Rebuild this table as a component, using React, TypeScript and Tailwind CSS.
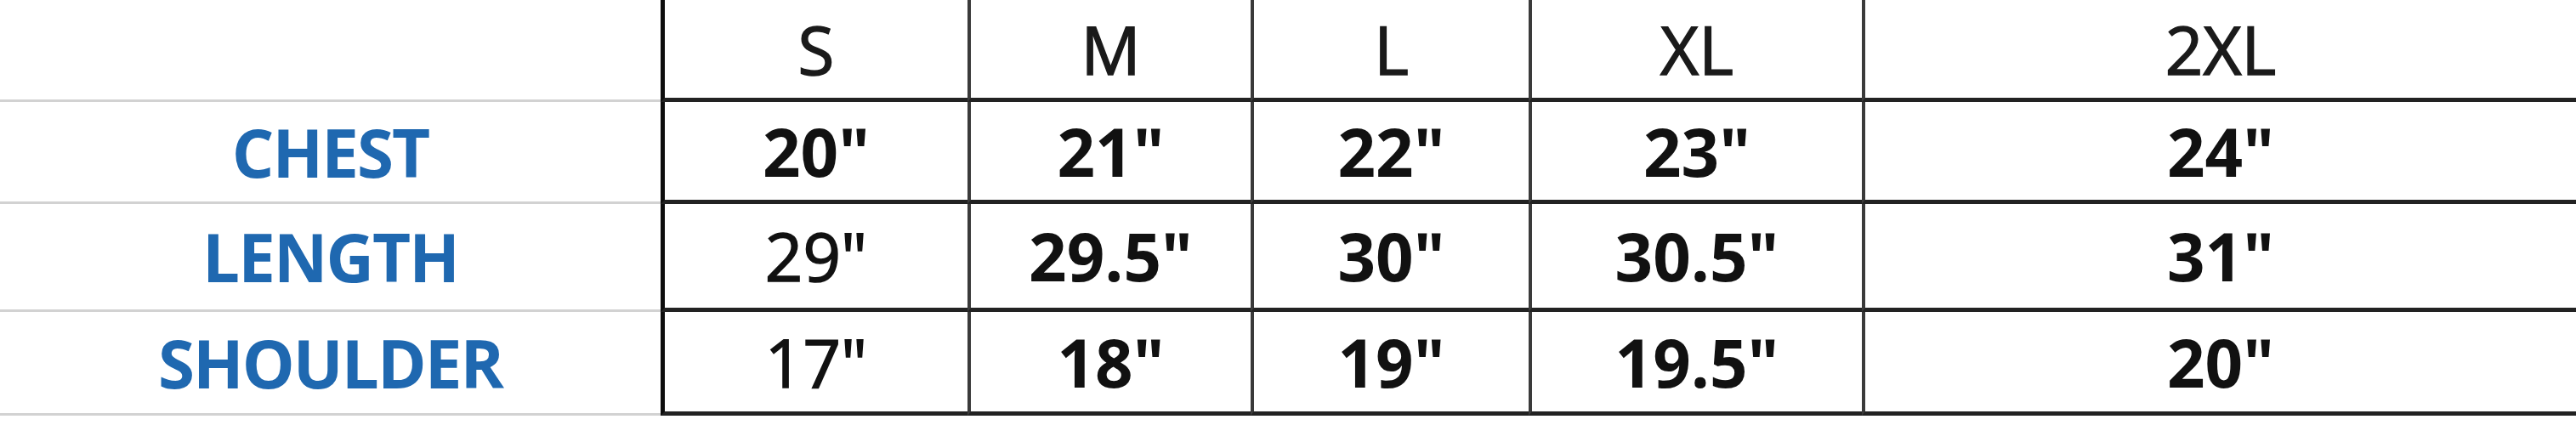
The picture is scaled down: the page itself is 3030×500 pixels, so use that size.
const SIZES = ["S", "M", "L", "XL", "2XL"];

// widths include the left border of each column
const COLS = ["w-[361px]", "w-[333px]", "w-[327px]", "w-[392px]", "flex-1"];

type Row = { label: string; h: string; values: { v: string; bold: boolean }[] };

const ROWS: Row[] = [
  {
    label: "CHEST",
    h: "h-[120px]",
    values: [
      { v: '20"', bold: true },
      { v: '21"', bold: true },
      { v: '22"', bold: true },
      { v: '23"', bold: true },
      { v: '24"', bold: true },
    ],
  },
  {
    label: "LENGTH",
    h: "h-[127px]",
    values: [
      { v: '29"', bold: false },
      { v: '29.5"', bold: true },
      { v: '30"', bold: true },
      { v: '30.5"', bold: true },
      { v: '31"', bold: true },
    ],
  },
  {
    label: "SHOULDER",
    h: "h-[122px]",
    values: [
      { v: '17"', bold: false },
      { v: '18"', bold: true },
      { v: '19"', bold: true },
      { v: '19.5"', bold: true },
      { v: '20"', bold: true },
    ],
  },
];

function Cell({ i, children }: { i: number; children: React.ReactNode }) {
  return (
    <div
      className={[
        COLS[i],
        "flex h-full items-center justify-center border-b-[5px] border-b-[#222]",
        i === 0 ? "border-l-[5px] border-l-[#0d0d0d]" : "border-l-4 border-l-[#3a3a3a]",
      ].join(" ")}
    >
      {children}
    </div>
  );
}

export default function App() {
  return (
    <div className="h-[500px] w-[3030px] overflow-hidden bg-white font-['Open_Sans',sans-serif] leading-none">
      <div className="flex h-[120px]">
        <div className="h-full w-[777px] border-b-[3px] border-b-[#d2d2d2]" />
        {SIZES.map((s, i) => (
          <Cell key={s} i={i}>
            <span className="text-[78px] font-normal text-[#1a1a1a] [-webkit-text-stroke:1.5px_#1a1a1a]">{s}</span>
          </Cell>
        ))}
      </div>
      {ROWS.map((row) => (
        <div key={row.label} className={`flex ${row.h}`}>
          <div className="flex h-full w-[777px] items-center justify-center border-b-[3px] border-b-[#d2d2d2]">
            <span className="text-[78px] font-bold tracking-[-0.025em] text-[#1f68b0]">{row.label}</span>
          </div>
          {row.values.map((c, i) => (
            <Cell key={i} i={i}>
              <span
                className={`text-[78px] text-[#111] ${
                  c.bold ? "font-bold" : "font-normal [-webkit-text-stroke:1.5px_#111]"
                }`}
              >
                {c.v}
              </span>
            </Cell>
          ))}
        </div>
      ))}
    </div>
  );
}
